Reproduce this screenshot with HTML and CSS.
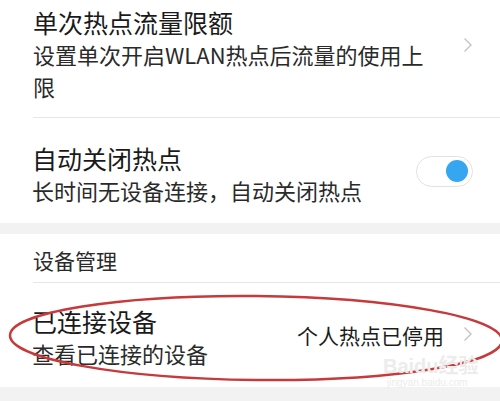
FILE: index.html
```html
<!DOCTYPE html>
<html lang="zh-CN">
<head>
    <meta charset="UTF-8">
    <meta name="viewport" content="width=device-width, initial-scale=1.0">
    <title>个人热点</title>
    <link rel="stylesheet" href="styles.css">
</head>
<body>
    <div class="page">
        <div class="row row-limit">
            <div class="row-text">
                <div class="row-title">单次热点流量限额</div>
                <div class="row-sub sub-wrap">设置单次开启WLAN热点后流量的使用上限</div>
            </div>
            <svg class="chevron" width="10" height="16" viewBox="0 0 10 16"><path d="M1.5 1.5 L8 8 L1.5 14.5" fill="none" stroke="#c4c4c4" stroke-width="1.4"/></svg>
        </div>
        <div class="row row-auto">
            <div class="row-text">
                <div class="row-title">自动关闭热点</div>
                <div class="row-sub">长时间无设备连接，自动关闭热点</div>
            </div>
            <div class="toggle"><span class="knob"></span></div>
        </div>
        <div class="gap"></div>
        <div class="section-head">设备管理</div>
        <div class="row row-devices">
            <div class="row-text">
                <div class="row-title">已连接设备</div>
                <div class="row-sub">查看已连接的设备</div>
            </div>
            <div class="row-value">个人热点已停用</div>
            <svg class="chevron" width="10" height="16" viewBox="0 0 10 16"><path d="M1.5 1.5 L8 8 L1.5 14.5" fill="none" stroke="#c4c4c4" stroke-width="1.4"/></svg>
        </div>
        <div class="gap gap-bottom"></div>

        <!-- red mark drawn over the screenshot -->
        <svg class="mark" width="500" height="401" viewBox="0 0 500 401">
            <ellipse cx="256" cy="338" rx="246" ry="42" transform="rotate(0.6 256 338)" fill="none" stroke="#c63a3c" stroke-width="2.5"/>
        </svg>
        <div class="watermark">
            <div class="wm-logo">Baidu经验</div>
            <div class="wm-url">jingyan.baidu.com</div>
        </div>
    </div>
</body>
</html>
```
FILE: styles.css
```css
body {
    margin: 0;
    padding: 0;
    background-color: #ffffff;
    font-family: "Noto Sans CJK SC", "Noto Sans", sans-serif;
    color: #1c1c1c;
}
.page {
    position: relative;
    width: 500px;
    height: 401px;
    overflow: hidden;
}
.row {
    display: flex;
    align-items: center;
    padding-left: 32px;
    padding-right: 27px;
}
.row-text {
    flex: 1;
}
.row-title {
    font-size: 25px;
    line-height: 32px;
    color: #1a1a1a;
}
.row-sub {
    font-size: 22px;
    line-height: 32px;
    color: #2a2a2a;
}
.sub-wrap {
    max-width: 400px;
}
.row-limit {
    padding-top: 6px;
    padding-bottom: 15px;
    margin-left: 33px;
    padding-left: 0;
    border-bottom: 1px solid #e6e6e6;
}
.row-limit .chevron {
    margin-top: -18px;
}
.row-auto {
    padding-top: 24px;
    padding-bottom: 17px;
}
.toggle {
    width: 51px;
    height: 29px;
    border: 1px solid #e2e2e2;
    border-radius: 16px;
    background: #ffffff;
    display: flex;
    align-items: center;
    justify-content: flex-end;
    padding-right: 4px;
    box-sizing: content-box;
    margin-top: -6px;
}
.knob {
    width: 22px;
    height: 22px;
    border-radius: 50%;
    background-color: #37a6f1;
}
.gap {
    height: 11px;
    background-color: #f2f2f2;
}
.gap-bottom {
    height: 14px;
}
.section-head {
    margin-left: 33px;
    height: 44px;
    padding-top: 4px;
    line-height: 44px;
    font-size: 21px;
    color: #2a2a2a;
    border-bottom: 1px solid #e6e6e6;
}
.row-devices {
    padding-top: 22px;
    padding-bottom: 18px;
}
.row-value {
    font-size: 21px;
    color: #1c1c1c;
    margin-right: 19px;
    margin-top: -4px;
}
.row-devices .chevron {
    margin-top: -6px;
}
.mark {
    position: absolute;
    left: 0;
    top: 0;
    pointer-events: none;
}
.watermark {
    position: absolute;
    left: 383px;
    top: 355px;
    color: #ececec;
    font-family: "Liberation Sans", "Noto Sans CJK SC", sans-serif;
}
.wm-logo {
    font-size: 20px;
    line-height: 22px;
    font-weight: bold;
}
.wm-url {
    font-size: 10px;
    line-height: 12px;
    padding-left: 4px;
}
```
